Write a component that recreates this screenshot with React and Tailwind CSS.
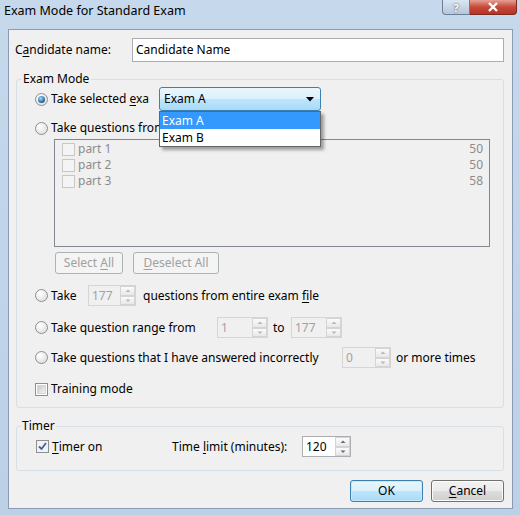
import React from "react";

const Radio = ({ checked }) => (
  <span className="inline-flex w-[13px] h-[13px] shrink-0 items-center justify-center rounded-full border border-[#8e8f8f] bg-[radial-gradient(circle_at_35%_30%,#ffffff,#d8d8d8)]">
    {checked && (
      <span className="w-[7px] h-[7px] rounded-full bg-[radial-gradient(circle_at_40%_35%,#9be0ff,#1b5c96_70%)]" />
    )}
  </span>
);

const Check = ({ checked, disabled }) => (
  <span
    className={`inline-flex w-[13px] h-[13px] shrink-0 items-center justify-center border ${
      disabled ? "border-[#c8c8c8] bg-[#f4f4f4]" : "border-[#8e8f8f] bg-white"
    }`}
  >
    {checked ? (
      <svg width="11" height="11" viewBox="0 0 11 11">
        <rect x="0" y="0" width="11" height="11" fill="#eef3f8" />
        <path d="M2 5.5 L4.5 8 L9 2" stroke="#4a5f97" strokeWidth="1.8" fill="none" />
      </svg>
    ) : (
      !disabled && (
        <span className="w-[9px] h-[9px] bg-[linear-gradient(135deg,#c9c9c9,#f3f3f3)] border border-[#d6d6d6]" />
      )
    )}
  </span>
);

const Spin = ({ value, w, disabled }) => (
  <div
    className={`flex h-[21px] items-stretch border ${w} ${
      disabled ? "border-[#d5d5d5] text-[#a0a0a0]" : "border-[#abadb3] bg-white text-black"
    }`}
  >
    <span className="flex-1 pl-[3px] leading-[19px]">{value}</span>
    <span className="flex w-[15px] flex-col">
      {["M1.5 4 L4 1.5 L6.5 4", "M1.5 1.5 L4 4 L6.5 1.5"].map((d, i) => (
        <span
          key={i}
          className="flex h-[9.5px] items-center justify-center border border-[#d4d4d4] bg-[linear-gradient(#fbfbfb,#e8e8e8)]"
        >
          <svg width="8" height="5" viewBox="0 0 8 5">
            <path d={d} fill={disabled ? "#b8b8b8" : "#6a6a6a"} />
          </svg>
        </span>
      ))}
    </span>
  </div>
);

const Btn = ({ children, w, disabled, primary }) => (
  <div
    className={`flex h-[22px] items-center justify-center rounded-[3px] border ${w} ${
      disabled
        ? "border-[#adb2b5] bg-[#f4f4f4] text-[#a0a0a0]"
        : primary
        ? "border-[#3c7fb1] bg-[linear-gradient(#eaf6fd_0%,#d9f0fc_50%,#bee6fd_51%,#a7d9f5_100%)] shadow-[inset_0_0_0_1px_#c6e9fb] text-black"
        : "border-[#707070] bg-[linear-gradient(#f2f2f2_0%,#ebebeb_50%,#dddddd_51%,#cfcfcf_100%)] shadow-[inset_0_0_0_1px_#fbfbfb] text-black"
    }`}
  >
    <span>{children}</span>
  </div>
);

const U = ({ children }) => <span className="underline underline-offset-2">{children}</span>;

const parts = [
  { name: "part 1", count: 50 },
  { name: "part 2", count: 50 },
  { name: "part 3", count: 58 },
];

export default function App() {
  return (
    <div className="flex h-[515px] w-[520px] flex-col bg-[linear-gradient(#c6d8ec,#bcd0e6)] font-['Noto_Sans','Liberation_Sans',sans-serif] text-[12px] text-black">
      {/* title bar */}
      <div className="flex h-[29px] shrink-0 items-start justify-between">
        <span className="pl-[4px] pt-[2px] text-[12.5px]">Exam Mode for Standard Exam</span>
        <div className="mr-[3px] flex">
          <div className="flex h-[15px] w-[28px] items-center justify-center rounded-bl-[4px] border border-t-0 border-[#6d7f96] bg-[linear-gradient(#dbe6f2,#b5c7db)] text-[11px] font-bold leading-none text-white [text-shadow:0_0_2px_#333]">
            ?
          </div>
          <div className="flex h-[15px] w-[47px] items-center justify-center rounded-br-[4px] border border-l-0 border-t-0 border-[#7a2a20] bg-[linear-gradient(#e6a195,#c7493a_50%,#b73322)]">
            <svg width="12" height="10" viewBox="0 0 12 10">
              <path d="M2 1 L10 9 M10 1 L2 9" stroke="#fff" strokeWidth="2.4" />
            </svg>
          </div>
        </div>
      </div>

      {/* client area */}
      <div className="relative ml-[8px] h-[480px] w-[505px] border border-[#8a9cb3] bg-[#f0f0f0]">
        <div className="mt-[8px] flex items-center">
          <span className="ml-[6px] w-[117px]">
            C<U>a</U>ndidate name:
          </span>
          <div className="flex h-[24px] w-[372px] items-center border border-[#abadb3] bg-white pl-[3px]">
            Candidate Name
          </div>
        </div>

        {/* Exam mode group */}
        <fieldset className="ml-[7px] mt-[9px] w-[488px] rounded-[3px] border border-[#d5dfe5] pb-[10px] pl-[18px]">
          <legend className="-ml-[14px] px-[2px] leading-[16px]">Exam Mode</legend>

          <div className="flex h-[24px] items-center">
            <Radio checked />
            <span className="ml-[3px] w-[108px] overflow-hidden whitespace-nowrap">
              Take selected <U>e</U>xa
            </span>
            <div className="relative">
              <div className="flex h-[24px] w-[162px] items-center justify-between rounded-[3px] border border-[#3c7fb1] bg-[linear-gradient(#eaf6fd_0%,#d9f0fc_50%,#bee6fd_51%,#a7d9f5_100%)] pl-[4px] pr-[6px]">
                <span>Exam A</span>
                <svg width="8" height="5" viewBox="0 0 8 5">
                  <path d="M0 0 L8 0 L4 4.5 Z" fill="#000" />
                </svg>
              </div>
              <div className="absolute left-0 top-[24px] z-10 w-[162px] border border-[#646464] bg-white shadow-[3px_3px_3px_rgba(0,0,0,0.35)]">
                <div className="h-[17px] bg-[#3399ff] pl-[2px] leading-[17px] text-white">Exam A</div>
                <div className="h-[17px] pl-[2px] leading-[17px]">Exam B</div>
              </div>
            </div>
          </div>

          <div className="mt-[9px] flex h-[16px] items-center">
            <Radio />
            <span className="ml-[3px] whitespace-nowrap">Take questions from</span>
          </div>

          <div className="ml-[19px] mt-[3px] h-[108px] w-[436px] border border-[#828790] pl-[7px] pr-[6px] pt-[1px] text-[#8c8c8c]">
            {parts.map((p) => (
              <div key={p.name} className="flex h-[16px] items-center">
                <Check disabled />
                <span className="ml-[3px] flex-1">{p.name}</span>
                <span>{p.count}</span>
              </div>
            ))}
          </div>

          <div className="ml-[20px] mt-[5px] flex gap-[10px]">
            <Btn w="w-[68px]" disabled>
              Select <U>A</U>ll
            </Btn>
            <Btn w="w-[86px]" disabled>
              <U>D</U>eselect All
            </Btn>
          </div>

          <div className="mt-[11px] flex h-[21px] items-center">
            <Radio />
            <span className="ml-[3px] w-[37px]">Take</span>
            <Spin value="177" w="w-[48px]" disabled />
            <span className="ml-[7px]">
              questions from entire exam <U>f</U>ile
            </span>
          </div>

          <div className="mt-[11px] flex h-[21px] items-center">
            <Radio />
            <span className="ml-[3px] w-[166px]">Take question range from</span>
            <Spin value="1" w="w-[51px]" disabled />
            <span className="ml-[5px] w-[18px]">to</span>
            <Spin value="177" w="w-[51px]" disabled />
          </div>

          <div className="mt-[9px] flex h-[21px] items-center">
            <Radio />
            <span className="ml-[3px] w-[291px]">Take questions that I have answered incorrectly</span>
            <Spin value="0" w="w-[49px]" disabled />
            <span className="ml-[5px]">or more times</span>
          </div>

          <div className="mt-[13px] flex h-[16px] items-center">
            <Check />
            <span className="ml-[3px]">Training mode</span>
          </div>
        </fieldset>

        {/* Timer group */}
        <fieldset className="ml-[7px] mt-[10px] w-[488px] rounded-[3px] border border-[#d5dfe5] pb-[13px] pl-[19px]">
          <legend className="-ml-[15px] px-[1px] leading-[16px]">Timer</legend>
          <div className="mt-[2px] flex h-[21px] items-center">
            <Check checked />
            <span className="ml-[3px] w-[120px]">
              <U>T</U>imer on
            </span>
            <span className="w-[130px]">
              Time <U>l</U>imit (minutes):
            </span>
            <Spin value="120" w="w-[49px]" />
          </div>
        </fieldset>

        <div className="mr-[8px] mt-[9px] flex justify-end gap-[8px]">
          <Btn w="w-[73px]" primary>
            OK
          </Btn>
          <Btn w="w-[73px]">
            <U>C</U>ancel
          </Btn>
        </div>
      </div>
    </div>
  );
}
